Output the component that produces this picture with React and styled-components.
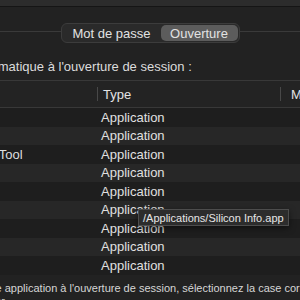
import React from "react";
import styled, { createGlobalStyle } from "styled-components";

const Global = createGlobalStyle`
	html, body {
		margin: 0;
		padding: 0;
		background: #222222;
	}
	body {
		font-family: "Liberation Sans", Arial, sans-serif;
		color: #dedede;
	}
`;

const Screen = styled.div`
	position: relative;
	width: 300px;
	height: 300px;
	overflow: hidden;
	background: #222222;
`;

const TopBar = styled.div`
	height: 6px;
	background: #2c2c2c;
	border-bottom: 1px solid #151515;
`;

const TabRow = styled.div`
	display: flex;
	align-items: flex-start;
	margin-top: 16px;
`;

const Rule = styled.div`
	flex: 1;
	height: 1px;
	margin-top: 8px;
	background: #3a3a3a;
`;

const Segmented = styled.div`
	display: flex;
	padding: 1px;
	height: 16px;
	background: #2a2a2a;
	border: 1px solid #3c3c3c;
	border-radius: 6px;
`;

const Segment = styled.div`
	width: ${(p) => p.w}px;
	display: flex;
	align-items: center;
	justify-content: center;
	font-size: 13px;
	color: #e2e2e2;
	border-radius: 5px;
	background: ${(p) => (p.active ? "#5c5c5c" : "transparent")};
`;

const Panel = styled.div`
	margin-left: -130px;
	width: 560px;
`;

const Label = styled.div`
	margin-top: 16px;
	padding-left: 10px;
	font-size: 13px;
	line-height: 15px;
	white-space: nowrap;
	color: #dcdcdc;
`;

const Table = styled.div`
	margin-top: 6px;
	border-top: 1px solid #383838;
`;

const Row = styled.div`
	display: grid;
	grid-template-columns: 227px 183px 1fr;
	align-items: center;
	height: ${(p) => (p.header ? "26px" : "18.5px")};
	background: ${(p) => (p.header ? "#232323" : p.odd ? "#272727" : "#1e1e1e")};
	border-bottom: ${(p) => (p.header ? "1px solid #383838" : "none")};
	font-size: 13px;
	white-space: nowrap;
`;

const HeadCell = styled.div`
	display: flex;
	align-items: center;
	gap: ${(p) => p.gap || 5}px;
	padding-left: ${(p) => p.pad || 0}px;
	color: #e4e4e4;
`;

const Divider = styled.span`
	width: 1px;
	height: 14px;
	background: #484848;
`;

const NameCell = styled.div`
	display: flex;
	align-items: center;
	gap: 10px;
	padding-left: 17px;
	overflow: hidden;
`;

const AppIcon = styled.span`
	width: 16px;
	height: 16px;
	flex: none;
	border-radius: 4px;
	background: ${(p) => p.color};
`;

const TypeCell = styled.div`
	padding-left: 4px;
	color: #e0e0e0;
`;

const Note = styled.div`
	margin-top: 7px;
	padding-left: 12px;
	font-size: 11px;
	line-height: 13px;
	white-space: nowrap;
	color: #d6d6d6;
`;

const Tooltip = styled.div`
	position: absolute;
	left: 138px;
	top: 209px;
	height: 15px;
	padding: 0 4px;
	display: flex;
	align-items: center;
	font-size: 11px;
	color: #e6e6e6;
	background: #2c2c2c;
	border: 1px solid #4d4d4d;
	box-shadow: 0 2px 6px rgba(0, 0, 0, 0.5);
	white-space: nowrap;
`;

const items = [
	{ name: "Dropbox", color: "#2f6fe0" },
	{ name: "Rectangle", color: "#8a5cd6" },
	{ name: "Elgato Control Tool", color: "#444" },
	{ name: "Alfred 5", color: "#6b4a2c" },
	{ name: "Bartender 4", color: "#3d7bd6" },
	{ name: "Silicon Info", color: "#888" },
	{ name: "Magnet", color: "#d64a4a" },
	{ name: "Amphetamine", color: "#e08a2f" },
	{ name: "Raycast", color: "#e0413b" },
];

export default function App() {
	return (
		<Screen>
			<Global />
			<TopBar />
			<TabRow>
				<Rule />
				<Segmented>
					<Segment w={98}>Mot de passe</Segment>
					<Segment w={77} active>Ouverture</Segment>
				</Segmented>
				<Rule />
			</TabRow>
			<Panel>
				<Label>Ouvrir de façon automatique à l'ouverture de session :</Label>
				<Table>
					<Row header>
						<HeadCell pad={14}>Élément</HeadCell>
						<HeadCell>
							<Divider />
							Type
						</HeadCell>
						<HeadCell gap={10}>
							<Divider />
							Masquer
						</HeadCell>
					</Row>
					{items.map((it, i) => (
						<Row key={it.name} odd={i % 2 === 1}>
							<NameCell>
								<AppIcon color={it.color} />
								{it.name}
							</NameCell>
							<TypeCell>Application</TypeCell>
							<div />
						</Row>
					))}
				</Table>
				<Note>
					Pour ne pas afficher une application à l'ouverture de session, sélectionnez la case correspondante
					<br />
					dans la colonne Masquer.
				</Note>
			</Panel>
			<Tooltip>/Applications/Silicon Info.app</Tooltip>
		</Screen>
	);
}
